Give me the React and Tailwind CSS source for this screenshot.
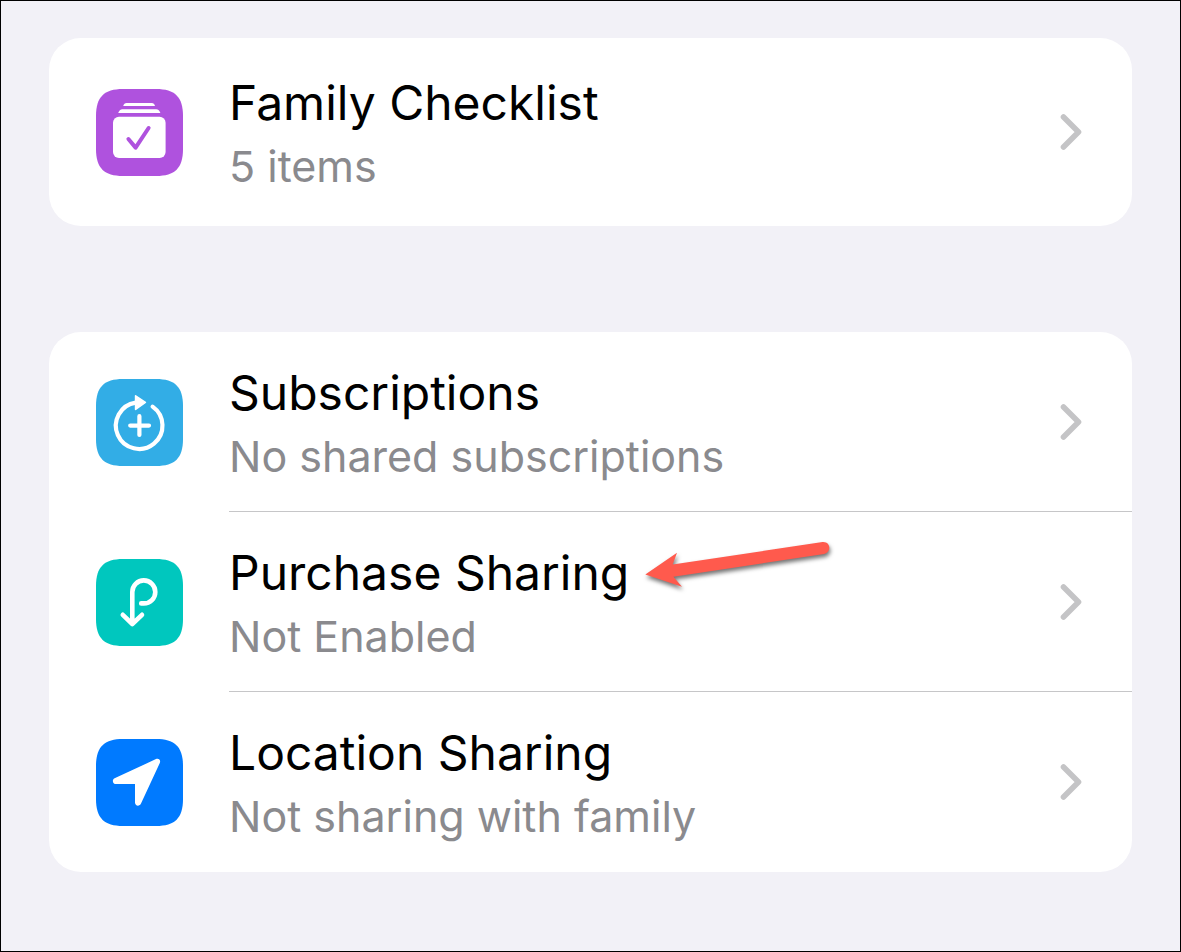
const TILE =
  "M0 27C0 8 8 0 27 0H60C79 0 87 8 87 27V60C87 79 79 87 60 87H27C8 87 0 79 0 60Z";

function Tile({ color, children }) {
  return (
    <svg viewBox="0 0 87 87" className="size-[87px] shrink-0" aria-hidden="true">
      <path d={TILE} fill={color} />
      {children}
    </svg>
  );
}

function ChecklistIcon() {
  return (
    <Tile color="#af52de">
      <path d="M27.2 17Q28 14 30.5 14H55.8Q58.3 14 59 17Z" fill="#fff" />
      <path d="M22.2 24Q23.4 20.2 26.4 20.2H60.2Q63.2 20.2 64.4 24Z" fill="#fff" />
      <rect x="17" y="27.7" width="52.6" height="41.3" rx="6" fill="#fff" />
      <path
        d="M32.4 50L39.6 58.6L52.6 39"
        fill="none"
        stroke="#af52de"
        strokeWidth="4"
        strokeLinecap="round"
        strokeLinejoin="round"
      />
    </Tile>
  );
}

function SubscriptionsIcon() {
  return (
    <Tile color="#32ade6">
      <g fill="none" stroke="#fff" strokeWidth="4.2" strokeLinecap="round">
        <path d="M56.6 27.6A23.3 23.3 0 1 1 39.7 23.6" />
        <path d="M34.2 46.6H53M43.4 37.2V56" />
      </g>
      <path
        d="M39.6 16.8L49.4 23.4L39.6 30.4Z"
        fill="#fff"
        stroke="#fff"
        strokeWidth="1.6"
        strokeLinejoin="round"
      />
    </Tile>
  );
}

function PurchaseIcon() {
  return (
    <Tile color="#00c7be">
      <path
        d="M36.3 64V32.9A11.5 11.5 0 1 1 47.8 44.4H45.2M26.8 55.8L36.3 65L46 55.8"
        fill="none"
        stroke="#fff"
        strokeWidth="4.6"
        strokeLinecap="round"
        strokeLinejoin="round"
      />
    </Tile>
  );
}

function LocationIcon() {
  return (
    <Tile color="#007aff">
      <path
        d="M18.6 39.2L60 20.1C62.8 19 65 21.2 63.8 24L45 64.6C43.7 67.7 39 67.4 39 63.6V45.1H20.2C16.6 45.1 15.6 40.6 18.6 39.2Z"
        fill="#fff"
      />
    </Tile>
  );
}

function Chevron() {
  return (
    <svg viewBox="0 0 22 38" className="mr-[50px] h-[38px] w-[22px] shrink-0" aria-hidden="true">
      <path
        d="M3.5 4L18.5 19L3.5 34"
        fill="none"
        stroke="#c4c4c6"
        strokeWidth="5.6"
        strokeLinecap="round"
        strokeLinejoin="round"
      />
    </svg>
  );
}

function Pointer() {
  return (
    <svg
      viewBox="0 0 200 60"
      className="absolute top-[23px] left-[411px] h-[60px] w-[200px] drop-shadow-[1px_3px_2px_rgba(0,0,0,0.55)]"
      aria-hidden="true"
    >
      <path
        d="M5.3 39.4L37 17.7L32.7 29.6L182.6 7C191 6.4 191.6 17.4 184.2 19L33.4 41.8L42 51.7Z"
        fill="#ff5a4d"
      />
    </svg>
  );
}

function Row({ icon, title, detail, divided, pointer, tall }) {
  return (
    <li>
      <a href="#" className="flex items-stretch pl-[47px]">
        <span className="flex items-center pr-[46px]">{icon}</span>
        <span
          className={
            "relative flex min-w-0 flex-1 items-center " +
            (tall ? "h-[188px] " : "h-[180px] ") +
            (divided ? "border-b border-[#c6c6c8]" : "")
          }
        >
          <span className="flex min-w-0 flex-1 flex-col pt-[5px]">
            <span className="text-[48px] leading-[64px] text-black">{title}</span>
            <span className="text-[43px] leading-[63px] text-[#8a8a8e]">{detail}</span>
          </span>
          <Chevron />
          {pointer && <Pointer />}
        </span>
      </a>
    </li>
  );
}

export default function App() {
  return (
    <main className="flex min-h-screen flex-col gap-[106px] border border-black bg-[#f2f1f7] px-12 pt-[37px] pb-12 font-['Inter','Liberation_Sans',sans-serif]">
      <ul className="rounded-[32px] bg-white">
        <Row tall icon={<ChecklistIcon />} title="Family Checklist" detail="5 items" />
      </ul>
      <ul className="rounded-[32px] bg-white">
        <Row
          divided
          icon={<SubscriptionsIcon />}
          title="Subscriptions"
          detail="No shared subscriptions"
        />
        <Row
          divided
          pointer
          icon={<PurchaseIcon />}
          title="Purchase Sharing"
          detail="Not Enabled"
        />
        <Row
          icon={<LocationIcon />}
          title="Location Sharing"
          detail="Not sharing with family"
        />
      </ul>
    </main>
  );
}
